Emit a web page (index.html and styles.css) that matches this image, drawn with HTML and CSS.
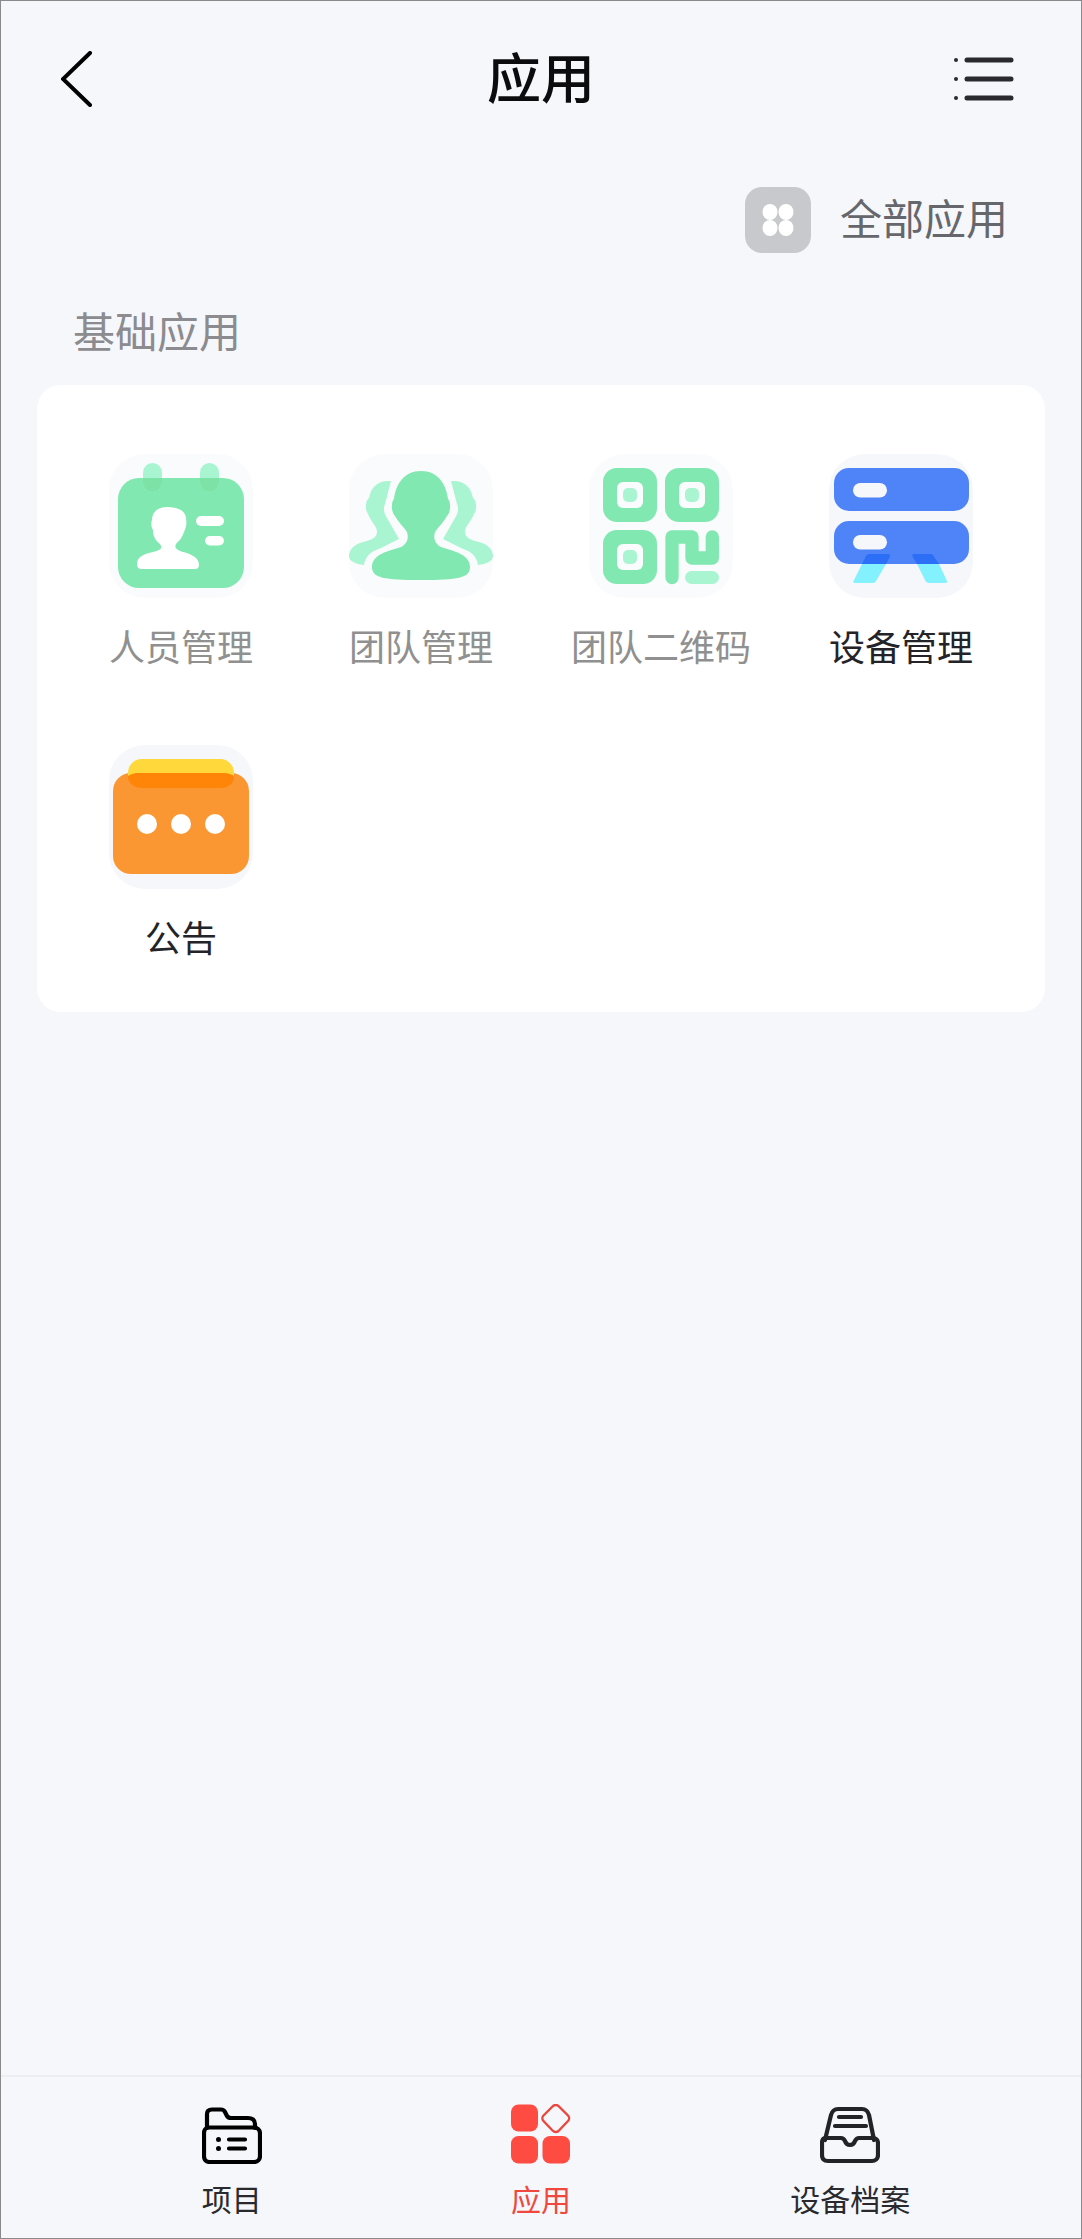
FILE: index.html
```html
<!DOCTYPE html>
<html lang="zh-CN">
<head>
<meta charset="utf-8">
<title>应用</title>
<link rel="stylesheet" href="styles.css">
</head>
<body>
<div class="phone">
  <header class="topbar">
    <div class="topbar-left">
      <svg class="back" viewBox="0 0 32 56"><path d="M29 2 L2 28 L29 54"/></svg>
    </div>
    <h1 class="title">应用</h1>
    <div class="topbar-right">
      <svg class="menu" viewBox="0 0 60 46">
        <circle cx="2" cy="4" r="2"/><circle cx="2" cy="23" r="2"/><circle cx="2" cy="42" r="2"/>
        <path d="M13 4H57M13 23H57M13 42H57"/>
      </svg>
    </div>
  </header>

  <div class="all-apps">
    <span class="all-apps-icon">
      <svg viewBox="0 0 66 66">
        <g fill="#fff">
          <ellipse cx="25" cy="25" rx="7.500" ry="8"/><ellipse cx="41" cy="25" rx="7.500" ry="8"/>
          <ellipse cx="25" cy="41" rx="7.500" ry="8"/><ellipse cx="41" cy="41" rx="7.500" ry="8"/>
        </g>
      </svg>
    </span>
    <span class="all-apps-text">全部应用</span>
  </div>

  <h2 class="section-title">基础应用</h2>

  <section class="card">
    <div class="app">
      <div class="tile">
        <svg viewBox="0 0 144 144">
          <rect x="9" y="24" width="126" height="110" rx="21" fill="#80e8b0"/>
          <rect x="34" y="9" width="19" height="29" rx="9.500" fill="#a9f5d2"/>
          <rect x="91" y="9" width="19" height="29" rx="9.500" fill="#a9f5d2"/>
          <path d="M34 24H53V28.500A9.500 9.500 0 0 1 34 28.500ZM91 24H110V28.500A9.500 9.500 0 0 1 91 28.500Z" fill="#7ce2a6"/>
          <path d="M28 110C28 102 36 100 44 98C52 96 54 94 51 90C46 86 44 82 44 76C42 73 42 68 43 66C43 58 49 53 58 53C68 53 76 56 77 64C78 70 77 74 75 78C73 84 70 87 67 90C65 94 68 96 74 98C83 100 90 104 90 111C90 114 88 115 86 115H33C30 115 28 114 28 110Z" fill="#fff"/>
          <rect x="87" y="62" width="28" height="10" rx="5" fill="#fff"/>
          <rect x="96" y="82" width="19" height="9.500" rx="4.750" fill="#fff"/>
        </svg>
      </div>
      <span class="app-label muted">人员管理</span>
    </div>

    <div class="app">
      <div class="tile">
        <svg viewBox="0 0 144 144">
          <g fill="#a9f5d2">
            <path d="M42 27C30 26 22 32 20 44C16 47 16 56 19 60C22 68 28 72 28 78C28 84 22 86 14 88C6 90 0 95 0 102C0 107 6 110 15 111C16 103 22 97 30 95L50 85L38 64C35 60 34 54 36 50C38 42 40 35 42 27Z"/>
            <path d="M102 27C114 26 122 32 124 44C128 47 128 56 125 60C122 68 116 72 116 78C116 84 122 86 130 88C138 90 144 95 144 102C144 107 138 110 129 111C128 103 122 97 114 95L94 85L106 64C109 60 110 54 108 50C106 42 104 35 102 27Z"/>
          </g>
          <path d="M72 17C55 17 47 30 45 45C42 48 42 58 46 62C49 68 55 73 58 78C60 84 58 90 52 93C40 97 23 100 23 113C23 124 35 126 72 126C109 126 121 124 121 113C121 100 104 97 92 93C86 90 84 84 86 78C89 73 95 68 98 62C102 58 102 48 99 45C97 30 89 17 72 17Z" fill="#80e8b0"/>
        </svg>
      </div>
      <span class="app-label muted">团队管理</span>
    </div>

    <div class="app">
      <div class="tile">
        <svg viewBox="0 0 144 144">
          <rect x="14" y="14" width="54" height="54" rx="14" fill="#80e8b0"/>
          <rect x="76" y="14" width="54" height="54" rx="14" fill="#80e8b0"/>
          <rect x="14" y="76" width="54" height="54" rx="14" fill="#80e8b0"/>
          <rect x="28" y="28" width="26" height="26" rx="6" fill="#fafbfd"/>
          <rect x="90" y="28" width="26" height="26" rx="6" fill="#fafbfd"/>
          <rect x="28" y="90" width="26" height="26" rx="6" fill="#fafbfd"/>
          <rect x="34" y="34" width="14" height="14" rx="5" fill="#a9f5d2"/>
          <rect x="96" y="34" width="14" height="14" rx="5" fill="#a9f5d2"/>
          <rect x="34" y="96" width="14" height="14" rx="5" fill="#a9f5d2"/>
          <path d="M83 123.500V83H103V104H123.300V83" fill="none" stroke="#80e8b0" stroke-width="13.300" stroke-linecap="round" stroke-linejoin="round"/>
          <rect x="96" y="117" width="34" height="13" rx="6.500" fill="#a9f5d2"/>
        </svg>
      </div>
      <span class="app-label muted">团队二维码</span>
    </div>

    <div class="app">
      <div class="tile tile-alt">
        <svg viewBox="0 0 144 144">
          <rect x="5" y="14" width="135" height="43" rx="15" fill="#4e84f7"/>
          <rect x="5" y="67" width="135" height="43" rx="15" fill="#4e84f7"/>
          <rect x="24" y="29" width="34" height="14.500" rx="7.250" fill="#f5f7fb"/>
          <rect x="24" y="81" width="34" height="14.500" rx="7.250" fill="#f5f7fb"/>
          <path d="M33 110H57L47 127C46.500 128.500 45 129 43 129H26C24.500 129 24 128 24.500 127Z" fill="#84f1ff"/>
          <path d="M88 110H110L118 127C118.500 128 118 129 116 129H101C99 129 97.500 128.500 96.500 127Z" fill="#84f1ff"/>
          <path d="M33 110L37 102C38 100.500 39 100 41 100H59C61 100 61.500 101 61 102.500L57 110Z" fill="#2c6ff6"/>
          <path d="M88 110L83.500 102.500C83 101 83.500 100 85 100H101C103 100 104 100.500 104.500 102L110 110Z" fill="#2c6ff6"/>
        </svg>
      </div>
      <span class="app-label">设备管理</span>
    </div>

    <div class="app">
      <div class="tile tile-alt">
        <svg viewBox="0 0 144 144">
          <rect x="4" y="28" width="136" height="101" rx="18" fill="#fa9733"/>
          <path d="M19 36V28C19 20 25 14 33 14H111C119 14 125 20 125 28V32C122 29 118 28 114 28H30C26 28 22 29 19 32Z" fill="#ffd93b"/>
          <path d="M19 31C22 29 26 28 30 28H114C118 28 122 29 125 31V32C125 38 120 43 112 43H33C25 43 19 38 19 32Z" fill="#ff8508"/>
          <circle cx="38" cy="79" r="10" fill="#fff"/>
          <circle cx="72" cy="79" r="10" fill="#fff"/>
          <circle cx="106" cy="79" r="10" fill="#fff"/>
        </svg>
      </div>
      <span class="app-label">公告</span>
    </div>
  </section>

  <div class="spacer"></div>

  <nav class="tabbar">
    <div class="tab">
      <svg class="tab-icon" viewBox="0 0 60 60">
        <g fill="none" stroke="#000" stroke-width="4.200" stroke-linejoin="round" stroke-linecap="round">
          <path d="M5 24V10C5 7 7 5.500 10 5.500H19C21 5.500 22 6 23 8L25 12C26 13.500 27 14 29 14H46C50 14 53 16 53 20V24"/>
          <path d="M7 23.500H52C55.500 23.500 58 26 58 29.500V52C58 55.500 55.500 58 52 58H7.500C4 58 2 55.500 2 52V29C2 26 4 23.500 7 23.500Z"/>
          <path d="M27 35.500H43M27 44.500H43"/>
        </g>
        <circle cx="16.500" cy="35.500" r="2.500"/><circle cx="16.500" cy="44.500" r="2.500"/>
      </svg>
      <span class="tab-label">项目</span>
    </div>
    <div class="tab tab-active">
      <svg class="tab-icon" viewBox="0 0 60 60">
        <g fill="#ff4c43">
          <rect x="0" y="0.500" width="27" height="27" rx="7.500"/>
          <rect x="0" y="32" width="27" height="27.500" rx="7.500"/>
          <rect x="31.500" y="32" width="27.500" height="27.500" rx="7.500"/>
        </g>
        <path d="M41.500 2.500C43.500 0.500 46.500 0.500 48 2.500L57 11.500C58.500 13 58.500 15.500 57 17L48 26.500C46.500 28.500 43.500 28.500 41.500 26.500L32.500 17C31 15.500 31 13 32.500 11.500Z" fill="none" stroke="#e8483f" stroke-width="2.400"/>
      </svg>
      <span class="tab-label">应用</span>
    </div>
    <div class="tab">
      <svg class="tab-icon" viewBox="0 0 60 60">
        <g fill="none" stroke="#222326" stroke-width="4.200" stroke-linejoin="round" stroke-linecap="round">
          <path d="M5 36L11 11C12 7.500 14 5 18 5H42C46 5 48 7.500 49 11L54 36"/>
          <path d="M6 34H21C23 34 24 35 25 37C26 40 28 41 30 41C32 41 34 40 35 37C36 35 37 34 39 34H53C56 34 58 36 58 39V51C58 55 55 57 52 57H8C4 57 2 55 2 51V39C2 36 3 34 6 34Z"/>
          <path d="M19 13H41M15 22H46"/>
        </g>
      </svg>
      <span class="tab-label">设备档案</span>
    </div>
  </nav>
</div>
</body>
</html>
```

FILE: styles.css
```css
* { box-sizing: border-box; }

html, body { margin: 0; padding: 0; }

body {
  font-family: "Noto Sans CJK SC", "Noto Sans", sans-serif;
  background: #f5f7fb;
}

.phone {
  width: 1082px;
  height: 2239px;
  display: flex;
  flex-direction: column;
  background: #f5f7fb;
  border: 1px solid #8a8a8a;
  overflow: hidden;
}

/* Top bar */
.topbar {
  display: grid;
  grid-template-columns: 1fr auto 1fr;
  align-items: center;
  height: 156px;
  padding: 0 60px;
}

.topbar-left { display: flex; justify-content: flex-start; }
.topbar-right { display: flex; justify-content: flex-end; }

.back {
  width: 32px;
  height: 56px;
  fill: none;
  stroke: #000;
  stroke-width: 4px;
  stroke-linecap: round;
  stroke-linejoin: miter;
}

.menu {
  width: 60px;
  height: 46px;
  margin-right: 7px;
  fill: #2a2a2e;
  stroke: none;
}

.menu path {
  fill: none;
  stroke: #2a2a2e;
  stroke-width: 5px;
  stroke-linecap: round;
}

.title {
  margin: 0 0 6px;
  font-size: 54px;
  line-height: 72px;
  font-weight: 500;
  color: #0c0c0e;
}

/* All apps link */
.all-apps {
  display: flex;
  justify-content: flex-end;
  align-items: center;
  gap: 29px;
  height: 66px;
  margin-top: 30px;
  padding-right: 73px;
}

.all-apps-icon {
  display: block;
  width: 66px;
  height: 66px;
  border-radius: 17px;
  background: #c8c9cc;
}

.all-apps-icon svg { display: block; width: 66px; height: 66px; }

.all-apps-text {
  margin-bottom: 6px;
  font-size: 42px;
  line-height: 60px;
  color: #66676c;
}

.section-title {
  margin: 47px 0 0;
  padding-left: 72px;
  font-size: 42px;
  line-height: 60px;
  font-weight: 400;
  color: #8b8b90;
}

/* App card */
.card {
  margin: 25px 36px 0;
  padding: 69px 24px 54px;
  display: grid;
  grid-template-columns: repeat(4, 240px);
  row-gap: 78px;
  background: #fff;
  border-radius: 24px;
}

.app {
  display: flex;
  flex-direction: column;
  align-items: center;
}

.tile {
  width: 144px;
  height: 144px;
  border-radius: 36px;
  background: #fafbfd;
}

.tile-alt { background: #f5f7fb; }

.tile svg {
  display: block;
  width: 144px;
  height: 144px;
  overflow: visible;
}

.app-label {
  margin-top: 25px;
  font-size: 36px;
  line-height: 44px;
  color: #242428;
  white-space: nowrap;
}

.app-label.muted { color: #909090; }

/* Tab bar */
.spacer { flex: 1; }

.tabbar {
  display: grid;
  grid-template-columns: repeat(3, 1fr);
  height: 163px;
  padding: 27px 76px 0;
  border-top: 2px solid #eceef2;
}

.tab {
  display: flex;
  flex-direction: column;
  align-items: center;
}

.tab-icon {
  display: block;
  width: 60px;
  height: 60px;
}

.tab-label {
  margin-top: 14px;
  font-size: 30px;
  line-height: 40px;
  color: #2a2a2e;
  white-space: nowrap;
}

.tab-active .tab-label { color: #f0483e; }
```
